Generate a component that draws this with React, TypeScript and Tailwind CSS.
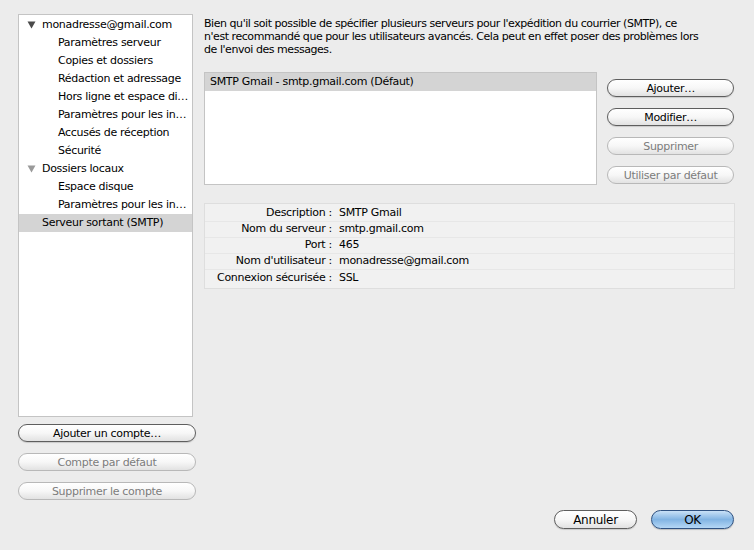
import React from "react";

const font = { fontFamily: '"DejaVu Sans", "Liberation Sans", sans-serif' };

function Tri({ light }: { light?: boolean }) {
  return (
    <svg width="9" height="8" viewBox="0 0 9 8" className="shrink-0">
      <path d="M0.5 0.5 L8.5 0.5 L4.5 7.5 Z" fill={light ? "#9a9a9a" : "#4a4a4a"} />
    </svg>
  );
}

function AquaButton({
  children,
  disabled,
  className = "",
}: {
  children: React.ReactNode;
  disabled?: boolean;
  className?: string;
}) {
  return (
    <div
      className={
        "flex items-center justify-center rounded-full border h-[18px] text-[11px] leading-none whitespace-nowrap bg-gradient-to-b from-white via-[#f7f7f7] to-[#e2e2e2] " +
        (disabled
          ? "border-[#b8b8b8] text-[#7c7c7c]"
          : "border-[#5e5e5e] text-black shadow-[0_1px_1px_rgba(0,0,0,0.15)]") +
        " " +
        className
      }
    >
      {children}
    </div>
  );
}

const tree: { label: string; level: number; tri?: "dark" | "light"; sel?: boolean }[] = [
  { label: "monadresse@gmail.com", level: 0, tri: "dark" },
  { label: "Paramètres serveur", level: 1 },
  { label: "Copies et dossiers", level: 1 },
  { label: "Rédaction et adressage", level: 1 },
  { label: "Hors ligne et espace di…", level: 1 },
  { label: "Paramètres pour les in…", level: 1 },
  { label: "Accusés de réception", level: 1 },
  { label: "Sécurité", level: 1 },
  { label: "Dossiers locaux", level: 0, tri: "light" },
  { label: "Espace disque", level: 1 },
  { label: "Paramètres pour les in…", level: 1 },
  { label: "Serveur sortant (SMTP)", level: 0, sel: true },
];

const details = [
  ["Description :", "SMTP Gmail"],
  ["Nom du serveur :", "smtp.gmail.com"],
  ["Port :", "465"],
  ["Nom d'utilisateur :", "monadresse@gmail.com"],
  ["Connexion sécurisée :", "SSL"],
];

export default function App() {
  return (
    <div
      style={font}
      className="w-[754px] h-[550px] bg-[#ececec] text-[11px] text-black flex overflow-hidden tracking-[-0.3px]"
    >
      {/* Left column */}
      <div className="flex flex-col pl-[18px] pt-[14px] w-[200px] shrink-0">
        <div className="w-[175px] h-[403px] bg-white border border-[#c4c4c4] pt-px">
          {tree.map((t, i) => (
            <div
              key={i}
              className={
                "h-[18px] flex items-center whitespace-nowrap overflow-hidden " +
                (t.sel ? "bg-[#d4d4d4]" : "")
              }
            >
              {t.level === 0 ? (
                <div className="w-[23px] shrink-0 flex justify-center pl-[1px]">
                  {t.tri ? <Tri light={t.tri === "light"} /> : null}
                </div>
              ) : (
                <div className="w-[39px] shrink-0" />
              )}
              <span>{t.label}</span>
            </div>
          ))}
        </div>
        <div className="flex flex-col gap-[11px] mt-[7px] w-[178px]">
          <AquaButton>Ajouter un compte…</AquaButton>
          <AquaButton disabled>Compte par défaut</AquaButton>
          <AquaButton disabled>Supprimer le compte</AquaButton>
        </div>
      </div>

      {/* Right column */}
      <div className="flex flex-col pl-[4px] pt-[17px] w-[534px] shrink-0">
        <p className="leading-[13px] whitespace-nowrap tracking-[-0.45px]">
          Bien qu'il soit possible de spécifier plusieurs serveurs pour l'expédition du courrier (SMTP), ce
          <br />
          n'est recommandé que pour les utilisateurs avancés. Cela peut en effet poser des problèmes lors
          <br />
          de l'envoi des messages.
        </p>
        <div className="flex mt-[16px]">
          <div className="w-[394px] h-[113px] bg-white border border-[#c4c4c4]">
            <div className="h-[18px] bg-[#d4d4d4] flex items-center px-[5px] whitespace-nowrap">
              SMTP Gmail - smtp.gmail.com (Défaut)
            </div>
          </div>
          <div className="flex flex-col gap-[11px] ml-[10px] mt-[7px] w-[127px]">
            <AquaButton>Ajouter…</AquaButton>
            <AquaButton>Modifier…</AquaButton>
            <AquaButton disabled>Supprimer</AquaButton>
            <AquaButton disabled>Utiliser par défaut</AquaButton>
          </div>
        </div>
        <div className="mt-[18px] w-[531px] border border-[#dedede] bg-[#f1f1f1] py-[2px]">
          {details.map(([k, v], i) => (
            <div
              key={i}
              className={
                "h-[16px] flex items-center whitespace-nowrap " +
                (i < details.length - 1 ? "border-b border-[#e7e7e7]" : "")
              }
            >
              <span className="w-[127px] text-right">{k}</span>
              <span className="ml-[7px]">{v}</span>
            </div>
          ))}
        </div>
        <div className="flex-1" />
        <div className="flex justify-end gap-[14px] mb-[21px]">
          <AquaButton className="w-[83px] !h-[19px] !text-[12px]">Annuler</AquaButton>
          <div className="w-[83px] h-[19px] rounded-full border border-[#2f5282] flex items-center justify-center text-[12px] leading-none bg-gradient-to-b from-[#c9e1f7] via-[#82b4e3] to-[#b5d7f5] shadow-[0_1px_1px_rgba(0,0,0,0.2)]">
            OK
          </div>
        </div>
      </div>
    </div>
  );
}
